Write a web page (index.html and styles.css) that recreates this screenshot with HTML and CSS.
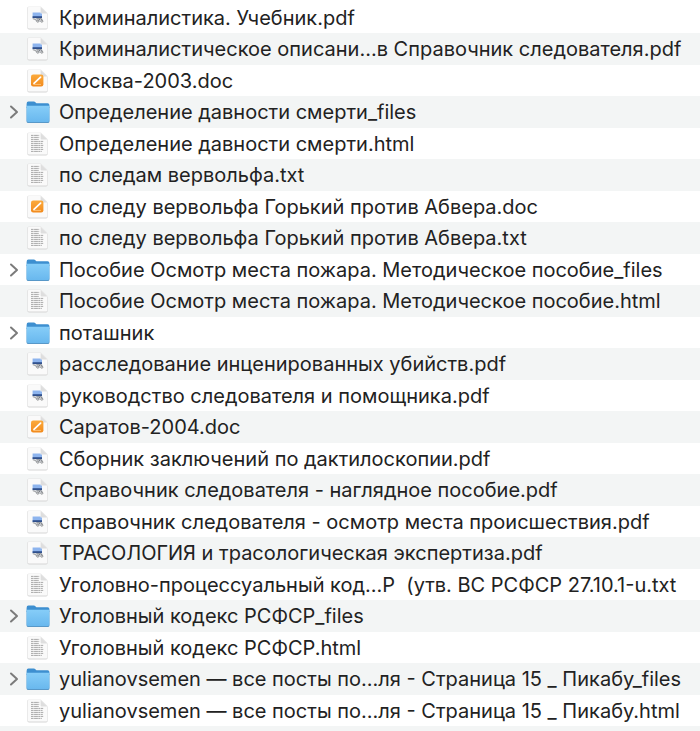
FILE: index.html
```html
<!DOCTYPE html>
<html lang="ru">
<head>
    <meta charset="UTF-8">
    <meta name="viewport" content="width=device-width, initial-scale=1.0">
    <title>Файлы</title>
    <link rel="stylesheet" href="styles.css">
</head>
<body>
    <!-- Shared icons -->
    <svg class="sprite" aria-hidden="true">
        <defs>
            <linearGradient id="folder-front" x1="0" y1="0" x2="0" y2="1">
                <stop offset="0" stop-color="#86cdf8"/>
                <stop offset="1" stop-color="#69b8ee"/>
            </linearGradient>
            <linearGradient id="orange" x1="0" y1="0" x2="0" y2="1">
                <stop offset="0" stop-color="#fbaa3c"/>
                <stop offset="1" stop-color="#f28a1c"/>
            </linearGradient>
        </defs>
        <symbol id="chevron" viewBox="0 0 12 16">
            <path d="M3 2.5 L9 8 L3 13.5" fill="none" stroke="#7b7b7b" stroke-width="2" stroke-linecap="round" stroke-linejoin="round"/>
        </symbol>
        <symbol id="page" viewBox="0 0 24 24">
            <path d="M2.6 .8 H15 L21.6 7.2 V22 Q21.6 23.4 20.2 23.4 H3 Q1.4 23.4 1.4 22 V2 Q1.4 .8 2.6 .8Z" fill="#d6d6d6"/>
            <path d="M2.8 1 H15 L21.2 7.2 V21.6 Q21.2 22.6 20.2 22.6 H3 Q1.8 22.6 1.8 21.6 V1.8 Q1.8 1 2.8 1Z" fill="#fafafa"/>
            <path d="M14.6 1 L21.2 7.4 H15.6 Q14.6 7.4 14.6 6.4Z" fill="#dedede"/>
        </symbol>
        <symbol id="pdf" viewBox="0 0 24 24">
            <use href="#page"/>
            <path d="M6.6 6.4 H14.6 V7.4 H16 V12 H6.6Z" fill="#8db4ee"/>
            <path d="M6.6 10.2 H16 V12.2 H6.6Z" fill="#30508c"/>
            <path d="M7 12.2 H16.4 V16 H10.6Z" fill="#dde0e5"/>
            <path d="M6.8 12.8 L9.4 13.4 L10.8 15.2" fill="none" stroke="#8b8b8b" stroke-width=".8"/>
            <path d="M10.4 12.8 H15.4 L16.6 15.2 M13.8 13 L12.4 15" fill="none" stroke="#626870" stroke-width=".8"/>
            <circle cx="11.8" cy="15.2" r="1.1" fill="#d5d8dc" stroke="#777" stroke-width=".6"/>
            <circle cx="15.8" cy="15.2" r="1.1" fill="#d5d8dc" stroke="#777" stroke-width=".6"/>
        </symbol>
        <symbol id="doc" viewBox="0 0 24 24">
            <use href="#page"/>
            <rect x="5" y="5.4" width="12.4" height="12" rx="2.2" fill="url(#orange)"/>
            <path d="M8 14.4 L14.6 8.2" stroke="#fff" stroke-width="1.7" stroke-linecap="round"/>
            <path d="M7.4 15.4 H15" stroke="#ffd49a" stroke-width=".7"/>
        </symbol>
        <symbol id="text" viewBox="0 0 24 24">
            <use href="#page"/>
            <path d="M5 3.4 H13.2 M5 5.4 H13.2 M5 7.4 H13 M5 9.4 H17.6 M5 11.4 H16.6 M5 13.4 H17.8 M5 15.4 H16.8 M5 17.4 H17.4 M5 19.4 H15.8" stroke="#a8a8a8" stroke-width="1" stroke-dasharray="2.6 .5 3.8 .4 1.8 .5"/>
        </symbol>
        <symbol id="folder" viewBox="0 0 24 24">
            <path d="M.6 4 Q.6 1.6 2.4 1.6 H7.8 Q8.8 1.6 9.6 2.4 L10.4 3.2 H21.6 Q23.4 3.2 23.4 5 V8 H.6Z" fill="#3d8fd0"/>
            <path d="M.6 7 H23.4 V21.4 Q23.4 23 21.8 23 H2.2 Q.6 23 .6 21.4Z" fill="#5898c8"/>
            <path d="M.6 5.8 H23.4 V20.6 Q23.4 22 21.8 22 H2.2 Q.6 22 .6 20.6Z" fill="url(#folder-front)"/>
        </symbol>
    </svg>

    <ul class="file-list">
        <li class="row"><svg class="icon"><use href="#pdf"/></svg><span class="name">Криминалистика. Учебник.pdf</span></li>
        <li class="row"><svg class="icon"><use href="#pdf"/></svg><span class="name">Криминалистическое описани...в Справочник следователя.pdf</span></li>
        <li class="row"><svg class="icon"><use href="#doc"/></svg><span class="name">Москва-2003.doc</span></li>
        <li class="row"><button class="toggle" type="button" aria-labelledby="folder-1"><svg class="chevron"><use href="#chevron"/></svg></button><svg class="icon"><use href="#folder"/></svg><span class="name" id="folder-1">Определение давности смерти_files</span></li>
        <li class="row"><svg class="icon"><use href="#text"/></svg><span class="name">Определение давности смерти.html</span></li>
        <li class="row"><svg class="icon"><use href="#text"/></svg><span class="name">по следам вервольфа.txt</span></li>
        <li class="row"><svg class="icon"><use href="#doc"/></svg><span class="name">по следу вервольфа Горький против Абвера.doc</span></li>
        <li class="row"><svg class="icon"><use href="#text"/></svg><span class="name">по следу вервольфа Горький против Абвера.txt</span></li>
        <li class="row"><button class="toggle" type="button" aria-labelledby="folder-2"><svg class="chevron"><use href="#chevron"/></svg></button><svg class="icon"><use href="#folder"/></svg><span class="name" id="folder-2">Пособие Осмотр места пожара. Методическое пособие_files</span></li>
        <li class="row"><svg class="icon"><use href="#text"/></svg><span class="name">Пособие Осмотр места пожара. Методическое пособие.html</span></li>
        <li class="row"><button class="toggle" type="button" aria-labelledby="folder-3"><svg class="chevron"><use href="#chevron"/></svg></button><svg class="icon"><use href="#folder"/></svg><span class="name" id="folder-3">поташник</span></li>
        <li class="row"><svg class="icon"><use href="#pdf"/></svg><span class="name">расследование инценированных убийств.pdf</span></li>
        <li class="row"><svg class="icon"><use href="#pdf"/></svg><span class="name">руководство следователя и помощника.pdf</span></li>
        <li class="row"><svg class="icon"><use href="#doc"/></svg><span class="name">Саратов-2004.doc</span></li>
        <li class="row"><svg class="icon"><use href="#pdf"/></svg><span class="name">Сборник заключений по дактилоскопии.pdf</span></li>
        <li class="row"><svg class="icon"><use href="#pdf"/></svg><span class="name">Справочник следователя - наглядное пособие.pdf</span></li>
        <li class="row"><svg class="icon"><use href="#pdf"/></svg><span class="name">справочник следователя - осмотр места происшествия.pdf</span></li>
        <li class="row"><svg class="icon"><use href="#pdf"/></svg><span class="name">ТРАСОЛОГИЯ и трасологическая экспертиза.pdf</span></li>
        <li class="row"><svg class="icon"><use href="#text"/></svg><span class="name">Уголовно-процессуальный код...Р  (утв. ВС РСФСР 27.10.1-u.txt</span></li>
        <li class="row"><button class="toggle" type="button" aria-labelledby="folder-4"><svg class="chevron"><use href="#chevron"/></svg></button><svg class="icon"><use href="#folder"/></svg><span class="name" id="folder-4">Уголовный кодекс РСФСР_files</span></li>
        <li class="row"><svg class="icon"><use href="#text"/></svg><span class="name">Уголовный кодекс РСФСР.html</span></li>
        <li class="row"><button class="toggle" type="button" aria-labelledby="folder-5"><svg class="chevron"><use href="#chevron"/></svg></button><svg class="icon"><use href="#folder"/></svg><span class="name" id="folder-5">yulianovsemen — все посты по...ля - Страница 15 _ Пикабу_files</span></li>
        <li class="row"><svg class="icon"><use href="#text"/></svg><span class="name">yulianovsemen — все посты по...ля - Страница 15 _ Пикабу.html</span></li>
    </ul>
</body>
</html>
```
FILE: styles.css
```css
* {
    box-sizing: border-box;
}
body {
    margin: 0;
    font-family: Inter, "Noto Sans", sans-serif;
    font-size: 20px;
    color: #222;
    background-color: #f3f5f5;
}
/* display: none would switch the gradients off */
.sprite {
    display: block;
    width: 0;
    height: 0;
}
.file-list {
    margin: 0;
    padding: 2px 0 0;
    list-style: none;
    background-color: #fff;
}
.row {
    display: grid;
    grid-template-columns: 12px 24px 1fr;
    align-items: center;
    height: 31px;
    padding-left: 8px;
    column-gap: 6px;
}
.row:nth-child(even) {
    height: 32px;
    background-color: #f3f5f5;
}
.toggle {
    grid-column: 1;
    display: flex;
    padding: 0;
    border: none;
    background: none;
    cursor: pointer;
}
.chevron {
    width: 12px;
    height: 16px;
}
.icon {
    grid-column: 2;
    width: 24px;
    height: 24px;
}
.name {
    grid-column: 3;
    padding-left: 3px;
    line-height: 24px;
    white-space: pre;
    overflow: hidden;
    text-overflow: ellipsis;
}
```
